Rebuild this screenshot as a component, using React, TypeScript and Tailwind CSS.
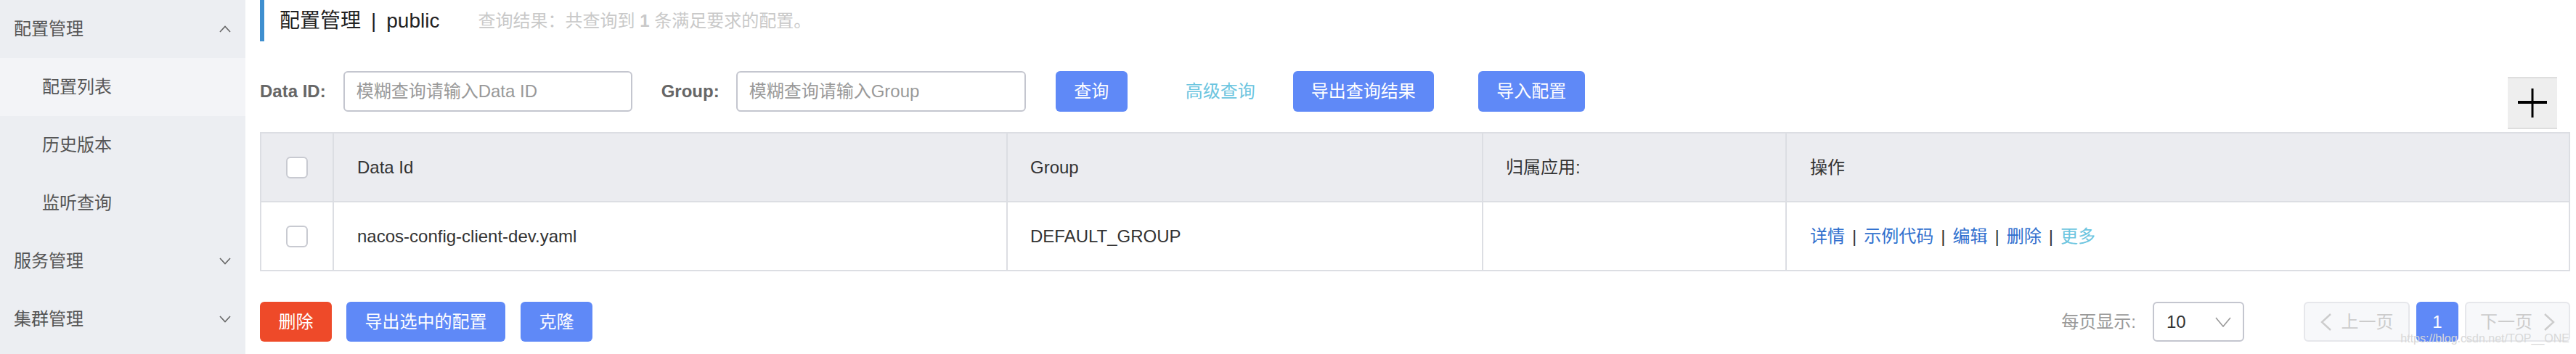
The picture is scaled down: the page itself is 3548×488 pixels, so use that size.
import React from 'react';

type MenuProps = { label: string; open?: boolean };

function Chevron({ up, className = '' }: { up?: boolean; className?: string }) {
  return (
    <svg className={className} width="16" height="10" viewBox="0 0 16 10" fill="none" stroke="currentColor" strokeWidth="1.6">
      <polyline points={up ? '1,9 8,1.5 15,9' : '1,1 8,8.5 15,1'} />
    </svg>
  );
}

function MenuGroup({ label, open }: MenuProps) {
  return (
    <div className="flex h-[80px] items-center justify-between pl-[19px] pr-[20px]">
      <span>{label}</span>
      <Chevron up={open} className="text-[#666]" />
    </div>
  );
}

function SubItem({ label, active }: { label: string; active?: boolean }) {
  return (
    <div className={`flex h-[80px] items-center pl-[58px] ${active ? 'bg-[#f3f4f7]' : ''}`}>{label}</div>
  );
}

function BlueButton({ children, className = '' }: { children: React.ReactNode; className?: string }) {
  return (
    <button
      type="button"
      className={`flex h-[56px] items-center justify-center rounded-[6px] bg-[#5f89f7] text-[24px] text-white ${className}`}
    >
      {children}
    </button>
  );
}

function Checkbox() {
  return <span className="block h-[30px] w-[30px] rounded-[6px] border-2 border-[#c8cad1] bg-white" />;
}

const Sep = () => <span className="mx-[10px] text-[#333]">|</span>;

export default function App() {
  return (
    <div className="relative flex h-[488px] w-[3548px] overflow-hidden bg-white font-[Liberation_Sans,Noto_Sans_CJK_SC,sans-serif] text-[#333]">
      {/* Sidebar */}
      <aside className="h-full w-[338px] shrink-0 bg-[#eceef2] text-[24px] text-[#555]">
        <MenuGroup label="配置管理" open />
        <SubItem label="配置列表" active />
        <SubItem label="历史版本" />
        <SubItem label="监听查询" />
        <MenuGroup label="服务管理" />
        <MenuGroup label="集群管理" />
      </aside>

      {/* Main */}
      <main className="flex-1 pl-[20px] pr-[8px]">
        {/* Title */}
        <div className="flex h-[57px] items-center border-l-[6px] border-[#3f8fcf] pl-[21px]">
          <span className="text-[28px] text-[#222]">配置管理</span>
          <span className="mx-[14px] text-[28px] text-[#222]">|</span>
          <span className="text-[28px] text-[#222]">public</span>
          <span className="ml-[53px] text-[24px] text-[#c9c9c9]">
            查询结果：共查询到 <b className="font-bold">1</b> 条满足要求的配置。
          </span>
        </div>

        {/* Toolbar */}
        <div className="mt-[41px] flex h-[80px] items-start">
          <div className="flex h-[56px] items-center">
            <label className="text-[24px] font-bold text-[#666]">Data ID:</label>
            <div className="ml-[24px] flex h-[56px] w-[398px] items-center rounded-[6px] border-2 border-[#c4c6cf] pl-[16px] text-[24px] text-[#999]">
              模糊查询请输入Data ID
            </div>
            <label className="ml-[40px] text-[24px] font-bold text-[#666]">Group:</label>
            <div className="ml-[23px] flex h-[56px] w-[399px] items-center rounded-[6px] border-2 border-[#c4c6cf] pl-[16px] text-[24px] text-[#999]">
              模糊查询请输入Group
            </div>
            <BlueButton className="ml-[41px] w-[99px]">查询</BlueButton>
            <span className="ml-[80px] text-[24px] text-[#6cc5df]">高级查询</span>
            <BlueButton className="ml-[52px] w-[194px]">导出查询结果</BlueButton>
            <BlueButton className="ml-[61px] w-[147px]">导入配置</BlueButton>
          </div>
          <div className="ml-auto mr-[18px] mt-[8px] flex h-[72px] w-[68px] items-center justify-center border-y-2 border-[#dedede] bg-[#eeeeee]">
            <svg width="42" height="42" viewBox="0 0 42 42">
              <line x1="21" y1="1" x2="21" y2="41" stroke="#000" strokeWidth="3" />
              <line x1="1" y1="20" x2="41" y2="20" stroke="#000" strokeWidth="4" />
            </svg>
          </div>
        </div>

        {/* Table */}
        <div className="mt-[4px] border-2 border-[#dcdee3] text-[24px] text-[#333]">
          <div className="grid h-[95px] grid-cols-[98px_928px_655px_418px_1fr] border-b-2 border-[#dcdee3] bg-[#ebecf0]">
            <div className="flex items-center justify-center">
              <Checkbox />
            </div>
            <div className="flex items-center border-l-2 border-[#dcdee3] pl-[32px]">Data Id</div>
            <div className="flex items-center border-l-2 border-[#dcdee3] pl-[31px]">Group</div>
            <div className="flex items-center border-l-2 border-[#dcdee3] pl-[31px]">归属应用:</div>
            <div className="flex items-center border-l-2 border-[#dcdee3] pl-[32px]">操作</div>
          </div>
          <div className="grid h-[93px] grid-cols-[98px_928px_655px_418px_1fr] bg-white">
            <div className="flex items-center justify-center">
              <Checkbox />
            </div>
            <div className="flex items-center border-l-2 border-[#dcdee3] pl-[32px]">nacos-config-client-dev.yaml</div>
            <div className="flex items-center border-l-2 border-[#dcdee3] pl-[31px]">DEFAULT_GROUP</div>
            <div className="border-l-2 border-[#dcdee3]" />
            <div className="flex items-center border-l-2 border-[#dcdee3] pl-[32px] text-[#2f6fce]">
              <span>详情</span>
              <Sep />
              <span>示例代码</span>
              <Sep />
              <span>编辑</span>
              <Sep />
              <span>删除</span>
              <Sep />
              <span className="text-[#6cc5df]">更多</span>
            </div>
          </div>
        </div>

        {/* Footer */}
        <div className="mt-[42px] flex h-[55px] items-center text-[24px]">
          <button type="button" className="flex h-[55px] w-[99px] items-center justify-center rounded-[6px] bg-[#ee4a29] text-white">
            删除
          </button>
          <BlueButton className="ml-[20px] !h-[55px] w-[219px]">导出选中的配置</BlueButton>
          <BlueButton className="ml-[21px] !h-[55px] w-[99px]">克隆</BlueButton>

          <div className="ml-auto flex items-center">
            <span className="text-[#999]">每页显示:</span>
            <div className="ml-[23px] flex h-[55px] w-[126px] items-center justify-between rounded-[6px] border-2 border-[#c4c6cf] pl-[17px] pr-[16px] text-[#333]">
              <span>10</span>
              <svg width="22" height="14" viewBox="0 0 22 14" fill="none" stroke="#999" strokeWidth="1.6">
                <polyline points="1,1 11,13 21,1" />
              </svg>
            </div>
            <div className="ml-[82px] flex h-[55px] w-[146px] items-center justify-center gap-[13px] rounded-[6px] border-2 border-[#e6e7eb] bg-[#f7f8fa] text-[#cccccc]">
              <svg width="16" height="24" viewBox="0 0 16 24" fill="none" stroke="#cccccc" strokeWidth="2.4">
                <polyline points="14,1 2,12 14,23" />
              </svg>
              <span>上一页</span>
            </div>
            <div className="ml-[9px] flex h-[55px] w-[58px] items-center justify-center rounded-[6px] bg-[#5f89f7] text-white">1</div>
            <div className="ml-[9px] flex h-[55px] w-[145px] items-center justify-center gap-[15px] rounded-[6px] border-2 border-[#e6e7eb] bg-[#f7f8fa] text-[#cccccc]">
              <span>下一页</span>
              <svg width="16" height="24" viewBox="0 0 16 24" fill="none" stroke="#cccccc" strokeWidth="2.4">
                <polyline points="2,1 14,12 2,23" />
              </svg>
            </div>
          </div>
        </div>
      </main>

      {/* watermark */}
      <span className="pointer-events-none absolute bottom-[9px] right-[9px] text-[16px] text-[#d8d8d8]">
        https://blog.csdn.net/TOP__ONE
      </span>
    </div>
  );
}
